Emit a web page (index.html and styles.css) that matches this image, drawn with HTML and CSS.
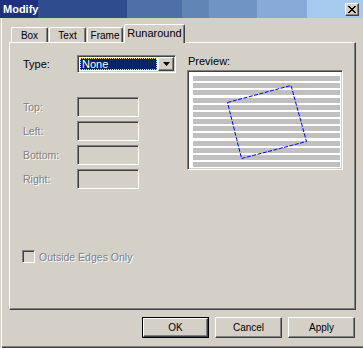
FILE: index.html
```html
<!DOCTYPE html>
<html lang="en">
<head>
    <meta charset="UTF-8" />
    <title>Modify</title>
    <link rel="stylesheet" href="styles.css">
</head>
<body>
    <div class="window">
        <div class="titlebar">
            <span class="title">Modify</span>
            <span class="close-btn">
                <svg width="8" height="7" viewBox="0 0 8 7"><path d="M0 0L7 7M1 0L8 7M7 0L0 7M8 0L1 7" stroke="#000" stroke-width="1"/></svg>
            </span>
        </div>

        <div class="dialog">
            <div class="tabs">
                <div class="tab tab-box">Box</div>
                <div class="tab tab-text">Text</div>
                <div class="tab tab-frame">Frame</div>
                <div class="tab tab-active">Runaround</div>
            </div>

            <div class="panel">
                <div class="left-col">
                    <div class="type-row">
                        <span class="label">Type:</span>
                        <div class="select sunken">
                            <span class="focus">None</span>
                            <span class="select-arrow raised">
                                <svg width="7" height="4" viewBox="0 0 7 4"><path d="M0 0H7L3.5 4Z" fill="#000"/></svg>
                            </span>
                        </div>
                    </div>

                    <div class="fields">
                        <div class="field-row"><span class="label disabled">Top:</span><span class="input sunken"></span></div>
                        <div class="field-row"><span class="label disabled">Left:</span><span class="input sunken"></span></div>
                        <div class="field-row"><span class="label disabled">Bottom:</span><span class="input sunken"></span></div>
                        <div class="field-row"><span class="label disabled">Right:</span><span class="input sunken"></span></div>
                    </div>

                    <div class="check-row">
                        <span class="checkbox sunken"></span>
                        <span class="disabled">Outside Edges Only</span>
                    </div>
                </div>

                <div class="right-col">
                    <div class="preview-label">Preview:</div>
                    <div class="preview sunken">
                        <svg width="152" height="96" viewBox="0 0 152 96">
                            <g fill="#c0c0c0">
                                <rect x="3" y="3" width="147" height="5"/>
                                <rect x="3" y="10" width="147" height="5"/>
                                <rect x="3" y="17" width="147" height="5"/>
                                <rect x="3" y="25" width="147" height="5"/>
                                <rect x="3" y="32" width="147" height="5"/>
                                <rect x="3" y="39" width="147" height="5"/>
                                <rect x="3" y="46" width="147" height="5"/>
                                <rect x="3" y="53" width="147" height="5"/>
                                <rect x="3" y="60" width="147" height="5"/>
                                <rect x="3" y="68" width="147" height="5"/>
                                <rect x="3" y="75" width="147" height="5"/>
                                <rect x="3" y="82" width="147" height="5"/>
                                <rect x="3" y="89" width="147" height="5"/>
                            </g>
                            <path d="M37.5 29.5L101 12.5L116.5 68.5L51.5 85.5Z" fill="none" stroke="#0000ff" stroke-width="1" stroke-dasharray="4 1.5"/>
                        </svg>
                    </div>
                </div>
            </div>

            <div class="buttons">
                <div class="default-ring"><button class="btn raised">OK</button></div>
                <button class="btn raised">Cancel</button>
                <button class="btn raised">Apply</button>
            </div>
        </div>
    </div>
</body>
</html>
```

FILE: styles.css
```css
body {
    margin: 0;
    width: 363px;
    height: 348px;
    overflow: hidden;
    background-color: #d4d0c8;
    font-family: "Liberation Sans", Arial, sans-serif;
    font-size: 10px;
    color: #000;
}

.window {
    height: 348px;
    box-sizing: border-box;
    box-shadow: inset 1px 0 0 #d4d0c8, inset 2px 0 0 #fff, inset 0 -1px 0 #404040, inset 0 -2px 0 #808080;
}

.titlebar {
    height: 18px;
    display: flex;
    align-items: center;
    justify-content: space-between;
    padding: 0 4px 0 3px;
    background: linear-gradient(to right,
        #1f3080 0 38px,
        #2e4c8e 38px 127px,
        #4f6fa8 127px 182px,
        #6186b5 182px 209px,
        #7095c5 209px 257px,
        #87aad8 257px 307px,
        #a6c9ee 307px);
}

.title {
    color: #fff;
    font-weight: bold;
    font-size: 11px;
}

.close-btn {
    width: 14px;
    height: 13px;
    box-sizing: border-box;
    display: flex;
    align-items: center;
    justify-content: center;
    background-color: #d4d0c8;
    border: 1px solid;
    border-color: #fff #404040 #404040 #fff;
    box-shadow: inset -1px -1px 0 #808080;
    margin-top: 1px;
}

.dialog {
    padding: 6px 0 0 9px;
}

.raised {
    border: 1px solid;
    border-color: #fff #404040 #404040 #fff;
    box-shadow: inset -1px -1px 0 #808080, inset 1px 1px 0 #d4d0c8;
    background-color: #d4d0c8;
}

.sunken {
    border: 1px solid;
    border-color: #808080 #fff #fff #808080;
    box-shadow: inset 1px 1px 0 #404040, inset -1px -1px 0 #d4d0c8;
    box-sizing: border-box;
}

/* tabs */
.tabs {
    display: flex;
    align-items: flex-end;
    height: 18px;
    padding-left: 2px;
    gap: 1px;
}

.tab {
    height: 15px;
    box-sizing: border-box;
    border: 1px solid;
    border-bottom: none;
    border-color: #fff #404040 transparent #fff;
    border-radius: 2px 2px 0 0;
    box-shadow: inset -1px 0 0 #808080;
    display: flex;
    align-items: center;
    justify-content: center;
    padding-top: 1px;
}

.tab-box { width: 37px; }
.tab-text { width: 37px; }
.tab-frame { width: 36px; }

.tab-active {
    width: 61px;
    height: 19px;
    margin-bottom: -1px;
    position: relative;
    z-index: 1;
    background-color: #d4d0c8;
    font-size: 11px;
    align-items: flex-start;
    padding-top: 2px;
}

/* panel */
.panel {
    width: 347px;
    height: 268px;
    box-sizing: border-box;
    border: 1px solid;
    border-color: #fff #404040 #404040 #fff;
    box-shadow: inset -1px -1px 0 #808080;
    padding: 12px 0 0 13px;
    display: grid;
    grid-template-columns: 164px 1fr;
}

.label {
    width: 54px;
    display: inline-block;
}

.disabled {
    color: #808080;
    text-shadow: 1px 1px 0 #fff;
}

.type-row {
    display: flex;
    align-items: center;
    height: 18px;
    font-size: 11px;
}

.select {
    width: 99px;
    height: 18px;
    display: flex;
    background-color: #fff;
    padding: 1px;
}

.focus {
    flex: 1;
    margin: 1px 1px 1px 1px;
    background-color: #0a246a;
    color: #fff;
    outline: 1px dotted #f0e080;
    outline-offset: -1px;
    padding-left: 2px;
    line-height: 12px;
    font-size: 11px;
}

.select-arrow {
    width: 16px;
    box-sizing: border-box;
    display: flex;
    align-items: center;
    justify-content: center;
}

.fields {
    margin-top: 24px;
    display: flex;
    flex-direction: column;
    gap: 4px;
}

.field-row {
    display: flex;
    align-items: center;
    font-size: 10.5px;
}

.input {
    width: 62px;
    height: 20px;
}

.check-row {
    margin-top: 61px;
    margin-left: -1px;
    display: flex;
    align-items: center;
    gap: 4px;
    font-size: 10.5px;
}

.checkbox {
    width: 13px;
    height: 13px;
}

.preview-label {
    height: 13px;
    line-height: 13px;
    font-size: 11px;
    padding-left: 1px;
}

.preview {
    margin-top: 2px;
    width: 156px;
    height: 100px;
    background-color: #fff;
    padding: 2px 0 0 2px;
}

.preview svg {
    display: block;
}

/* buttons */
.buttons {
    display: flex;
    justify-content: flex-end;
    align-items: center;
    gap: 6px;
    width: 346px;
    margin-top: 7px;
}

.btn {
    width: 67px;
    height: 21px;
    box-sizing: border-box;
    font-family: "Liberation Sans", Arial, sans-serif;
    font-size: 10px;
    color: #000;
    padding: 0;
}

.default-ring {
    border: 1px solid #000;
    display: flex;
}

.default-ring .btn {
    width: 65px;
    height: 19px;
}
```
